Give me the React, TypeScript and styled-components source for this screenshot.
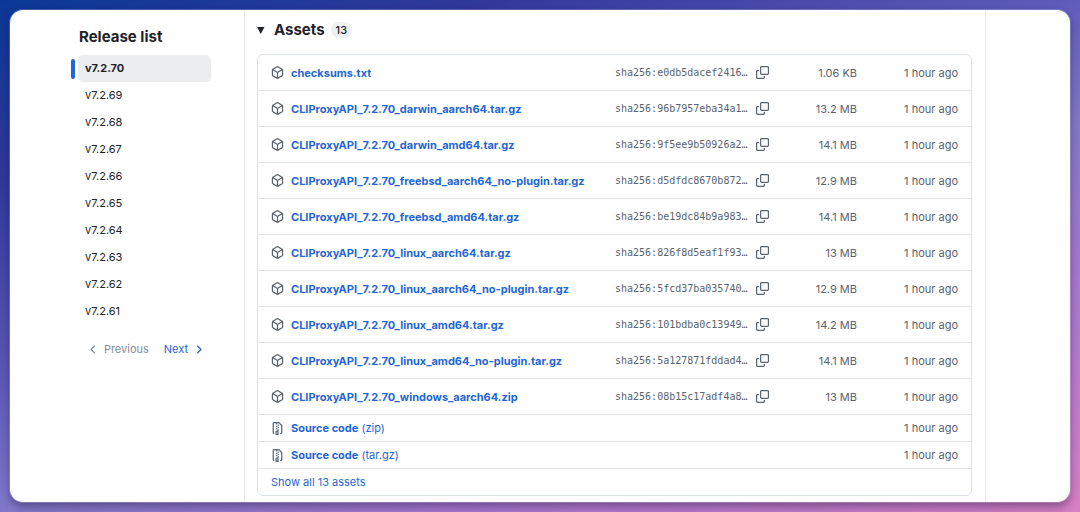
import React from "react";
import styled, { createGlobalStyle } from "styled-components";

const GlobalStyle = createGlobalStyle`
  *, *::before, *::after { box-sizing: border-box; }
  body {
    margin: 0;
    color: #1f2328;
    font-family: Inter, "Liberation Sans", sans-serif;
    font-size: 11px;
    line-height: 20px;
  }
  a { color: #1f66d6; text-decoration: none; }
  a:hover { text-decoration: underline; }
`;

const Backdrop = styled.div`
  display: flex;
  min-height: 100vh;
  padding: 10px;
  background: linear-gradient(160deg, #0a3896 0%, #32389a 20%, #5c59b8 42%, #8279ca 57%, #a878d0 74%, #d880c4 100%);
`;

const Window = styled.div`
  display: grid;
  grid-template-columns: 234px minmax(0, 1fr) 84px;
  flex: 1;
  overflow: hidden;
  border-radius: 13px;
  background: #fff;
  box-shadow: 0 0 0 1px rgba(255, 255, 255, 0.2), 0 5px 10px rgba(20, 10, 50, 0.4);
`;

const Sidebar = styled.aside`
  padding: 15px 33px 0 61px;
`;

const SidebarTitle = styled.h2`
  margin: 0 0 6px;
  padding-left: 8px;
  font-size: 15px;
  font-weight: 700;
  line-height: 24px;
`;

const ReleaseItems = styled.ul`
  margin: 0;
  padding: 0;
  list-style: none;
`;

const ReleaseItem = styled.li`
  display: flex;
  align-items: center;
  gap: 3px;
  height: 27px;
`;

const Marker = styled.span<{ $active: boolean }>`
  width: 4px;
  height: 20px;
  border-radius: 3px;
  background: ${(p) => (p.$active ? "#1f66d6" : "transparent")};
`;

const ReleaseLink = styled.a<{ $active: boolean }>`
  flex: 1;
  padding: 0 7px;
  border-radius: 5px;
  background: ${(p) => (p.$active ? "#ecedef" : "transparent")};
  color: #1f2328;
  font-weight: ${(p) => (p.$active ? 700 : 400)};
  line-height: 27px;
`;

const Pager = styled.nav`
  display: flex;
  justify-content: center;
  gap: 15px;
  margin-top: 14px;
  padding-left: 10px;
`;

const PagerButton = styled.button`
  display: flex;
  align-items: center;
  gap: 4px;
  padding: 0;
  border: 0;
  background: none;
  color: #1f66d6;
  font: inherit;
  cursor: pointer;

  &:disabled {
    color: #868d96;
    cursor: default;
  }
`;

const Main = styled.main`
  padding: 9px 13px 6px 12px;
  border: solid #e6e8eb;
  border-width: 0 1px;
`;

const AssetsSummary = styled.summary`
  display: flex;
  align-items: center;
  height: 22px;
  margin-bottom: 13px;
  list-style: none;
  cursor: pointer;
`;

const Caret = styled.svg`
  display: block;
  width: 8px;
  height: 8px;
  fill: #1f2328;
`;

const AssetsTitle = styled.h3`
  margin: 0 6px 0 9px;
  font-size: 15px;
  font-weight: 700;
`;

const Counter = styled.span`
  padding: 0 5px;
  border-radius: 8px;
  background: #eff0f2;
  font-weight: 500;
  line-height: 16px;
`;

const AssetBox = styled.div`
  border: 1px solid #dde2e7;
  border-radius: 6px;
`;

const AssetTable = styled.table`
  width: 100%;
  border-spacing: 0;
  table-layout: fixed;
`;

const SizedColumn = styled.col<{ $width: number }>`
  width: ${(p) => p.$width}px;
`;

const AssetRow = styled.tr<{ $compact?: boolean }>`
  height: ${(p) => (p.$compact ? 27 : 36)}px;
`;

const Cell = styled.td`
  padding: 0;
  border-bottom: 1px solid #e1e5e9;
  color: #59636e;
  text-align: right;
  white-space: nowrap;

  &:last-child { padding-right: 13px; }
`;

const NameCell = styled(Cell)`
  padding-left: 13px;
  text-align: left;
`;

const NameContent = styled.div`
  display: flex;
  align-items: center;
  gap: 7px;
`;

const AssetLink = styled.a`
  overflow: hidden;
  text-overflow: ellipsis;
`;

const AssetName = styled.span`
  font-weight: 700;
`;

const DigestCell = styled(Cell)`
  text-align: left;
`;

const DigestContent = styled.div`
  display: flex;
  align-items: center;
  gap: 9px;
`;

const Digest = styled.code`
  font-family: "DejaVu Sans Mono", monospace;
  font-size: 10px;
`;

const CopyButton = styled.button`
  padding: 0;
  border: 0;
  background: none;
  color: #59636e;
  cursor: pointer;
`;

const ShowAll = styled.div`
  padding: 3px 13px;
`;

const IconSvg = styled.svg`
  display: block;
  flex: none;
  width: 13px;
  height: 13px;
  fill: currentColor;
`;

const iconPaths = {
  package: [
    "m8.878.392 5.25 3.045c.54.314.872.89.872 1.514v6.098a1.75 1.75 0 0 1-.872 1.514l-5.25 3.045a1.75 1.75 0 0 1-1.756 0l-5.25-3.045A1.75 1.75 0 0 1 1 11.049V4.951c0-.624.332-1.201.872-1.514L7.122.392a1.75 1.75 0 0 1 1.756 0ZM7.875 1.69l-4.63 2.685L8 7.133l4.755-2.758-4.63-2.685a.248.248 0 0 0-.25 0ZM2.5 5.677v5.372c0 .09.047.171.125.216l4.625 2.683V8.432Zm6.25 8.271 4.625-2.683a.25.25 0 0 0 .125-.216V5.677L8.75 8.432Z",
  ],
  copy: [
    "M0 6.75C0 5.784.784 5 1.75 5h1.5a.75.75 0 0 1 0 1.5h-1.5a.25.25 0 0 0-.25.25v7.5c0 .138.112.25.25.25h7.5a.25.25 0 0 0 .25-.25v-1.5a.75.75 0 0 1 1.5 0v1.5A1.75 1.75 0 0 1 9.25 16h-7.5A1.75 1.75 0 0 1 0 14.25Z",
    "M5 1.75C5 .784 5.784 0 6.75 0h7.5C15.216 0 16 .784 16 1.75v7.5A1.75 1.75 0 0 1 14.25 11h-7.5A1.75 1.75 0 0 1 5 9.25Zm1.75-.25a.25.25 0 0 0-.25.25v7.5c0 .138.112.25.25.25h7.5a.25.25 0 0 0 .25-.25v-7.5a.25.25 0 0 0-.25-.25Z",
  ],
  zip: [
    "M3.5 1.75v11.5c0 .09.048.173.126.217a.75.75 0 0 1-.752 1.298A1.748 1.748 0 0 1 2 13.25V1.75C2 .784 2.784 0 3.75 0h5.586c.464 0 .909.185 1.237.513l2.914 2.914c.329.328.513.773.513 1.237v8.586A1.75 1.75 0 0 1 12.25 15h-.5a.75.75 0 0 1 0-1.5h.5a.25.25 0 0 0 .25-.25V4.664a.25.25 0 0 0-.073-.177L9.513 1.573a.25.25 0 0 0-.177-.073H7.25a.75.75 0 0 1 0 1.5h-.5a.75.75 0 0 1 0-1.5h-3a.25.25 0 0 0-.25.25Zm3.75 8.75h.5c.966 0 1.75.784 1.75 1.75v3a.75.75 0 0 1-.75.75h-2.5a.75.75 0 0 1-.75-.75v-3c0-.966.784-1.75 1.75-1.75ZM6 5.25a.75.75 0 0 1 .75-.75h.5a.75.75 0 0 1 0 1.5h-.5A.75.75 0 0 1 6 5.25Zm.75 2.25h.5a.75.75 0 0 1 0 1.5h-.5a.75.75 0 0 1 0-1.5ZM8 6.75A.75.75 0 0 1 8.75 6h.5a.75.75 0 0 1 0 1.5h-.5A.75.75 0 0 1 8 6.75ZM8.75 3h.5a.75.75 0 0 1 0 1.5h-.5a.75.75 0 0 1 0-1.5ZM8 9.75A.75.75 0 0 1 8.75 9h.5a.75.75 0 0 1 0 1.5h-.5A.75.75 0 0 1 8 9.75Zm-1 2.5v2.25h1v-2.25a.25.25 0 0 0-.25-.25h-.5a.25.25 0 0 0-.25.25Z",
  ],
  left: [
    "M9.78 12.78a.75.75 0 0 1-1.06 0L4.47 8.53a.75.75 0 0 1 0-1.06l4.25-4.25a.751.751 0 0 1 1.042.018.751.751 0 0 1 .018 1.042L6.06 8l3.72 3.72a.75.75 0 0 1 0 1.06Z",
  ],
  right: [
    "M6.22 3.22a.75.75 0 0 1 1.06 0l4.25 4.25a.75.75 0 0 1 0 1.06l-4.25 4.25a.751.751 0 0 1-1.042-.018.751.751 0 0 1-.018-1.042L9.94 8 6.22 4.28a.75.75 0 0 1 0-1.06Z",
  ],
};

function Icon({ name }: { name: keyof typeof iconPaths }) {
  return (
    <IconSvg viewBox="0 0 16 16" aria-hidden="true">
      {iconPaths[name].map((d) => (
        <path key={d} d={d} />
      ))}
    </IconSvg>
  );
}

const releases = [70, 69, 68, 67, 66, 65, 64, 63, 62, 61].map((n) => `v7.2.${n}`);

const assets = [
  { name: "checksums.txt", digest: "e0db5dacef2416", size: "1.06 KB" },
  { name: "CLIProxyAPI_7.2.70_darwin_aarch64.tar.gz", digest: "96b7957eba34a1", size: "13.2 MB" },
  { name: "CLIProxyAPI_7.2.70_darwin_amd64.tar.gz", digest: "9f5ee9b50926a2", size: "14.1 MB" },
  { name: "CLIProxyAPI_7.2.70_freebsd_aarch64_no-plugin.tar.gz", digest: "d5dfdc8670b872", size: "12.9 MB" },
  { name: "CLIProxyAPI_7.2.70_freebsd_amd64.tar.gz", digest: "be19dc84b9a983", size: "14.1 MB" },
  { name: "CLIProxyAPI_7.2.70_linux_aarch64.tar.gz", digest: "826f8d5eaf1f93", size: "13 MB" },
  { name: "CLIProxyAPI_7.2.70_linux_aarch64_no-plugin.tar.gz", digest: "5fcd37ba035740", size: "12.9 MB" },
  { name: "CLIProxyAPI_7.2.70_linux_amd64.tar.gz", digest: "101bdba0c13949", size: "14.2 MB" },
  { name: "CLIProxyAPI_7.2.70_linux_amd64_no-plugin.tar.gz", digest: "5a127871fddad4", size: "14.1 MB" },
  { name: "CLIProxyAPI_7.2.70_windows_aarch64.zip", digest: "08b15c17adf4a8", size: "13 MB" },
];

const sources = ["zip", "tar.gz"];

export default function App() {
  return (
    <>
      <GlobalStyle />
      <Backdrop>
        <Window>
          <Sidebar>
            <SidebarTitle>Release list</SidebarTitle>
            <ReleaseItems>
              {releases.map((version, i) => (
                <ReleaseItem key={version}>
                  <Marker $active={i === 0} />
                  <ReleaseLink href="#" $active={i === 0}>{version}</ReleaseLink>
                </ReleaseItem>
              ))}
            </ReleaseItems>
            <Pager>
              <PagerButton type="button" disabled>
                <Icon name="left" />
                Previous
              </PagerButton>
              <PagerButton type="button">
                Next
                <Icon name="right" />
              </PagerButton>
            </Pager>
          </Sidebar>
          <Main>
            <details open>
              <AssetsSummary>
                <Caret viewBox="0 0 8 8"><path d="M0 1h7.5L3.75 8z" /></Caret>
                <AssetsTitle>Assets</AssetsTitle>
                <Counter>13</Counter>
              </AssetsSummary>
              <AssetBox>
                <AssetTable>
                  <colgroup>
                    <col />
                    <SizedColumn $width={156} />
                    <SizedColumn $width={86} />
                    <SizedColumn $width={114} />
                  </colgroup>
                  <tbody>
                    {assets.map((asset) => (
                      <AssetRow key={asset.name}>
                        <NameCell>
                          <NameContent>
                            <Icon name="package" />
                            <AssetLink href="#"><AssetName>{asset.name}</AssetName></AssetLink>
                          </NameContent>
                        </NameCell>
                        <DigestCell>
                          <DigestContent>
                            <Digest>sha256:{asset.digest}…</Digest>
                            <CopyButton type="button" aria-label="Copy digest"><Icon name="copy" /></CopyButton>
                          </DigestContent>
                        </DigestCell>
                        <Cell>{asset.size}</Cell>
                        <Cell>1 hour ago</Cell>
                      </AssetRow>
                    ))}
                    {sources.map((format) => (
                      <AssetRow key={format} $compact>
                        <NameCell>
                          <NameContent>
                            <Icon name="zip" />
                            <AssetLink href="#"><AssetName>Source code</AssetName> ({format})</AssetLink>
                          </NameContent>
                        </NameCell>
                        <Cell />
                        <Cell />
                        <Cell>1 hour ago</Cell>
                      </AssetRow>
                    ))}
                  </tbody>
                </AssetTable>
                <ShowAll><a href="#">Show all 13 assets</a></ShowAll>
              </AssetBox>
            </details>
          </Main>
        </Window>
      </Backdrop>
    </>
  );
}
